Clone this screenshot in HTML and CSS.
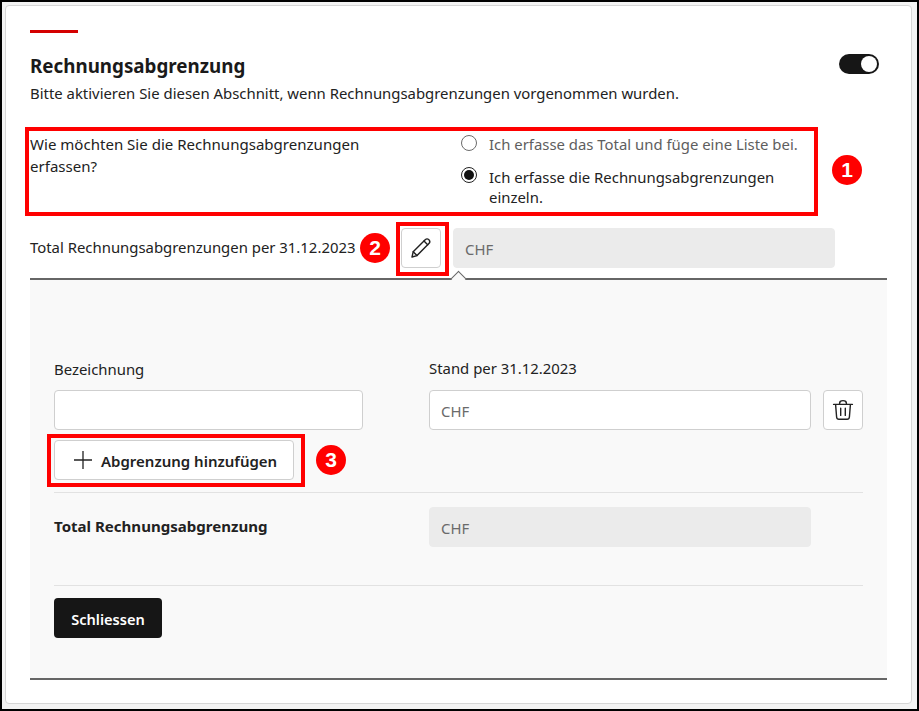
FILE: index.html
```html
<!DOCTYPE html>
<html lang="de">
<head>
<meta charset="utf-8">
<title>Rechnungsabgrenzung</title>
<link rel="stylesheet" href="styles.css">
</head>
<body>
<div class="frame">
  <section class="card">
    <div class="accent"></div>
    <div class="head">
      <h2 class="title">Rechnungsabgrenzung</h2>
      <span class="toggle"><span class="knob"></span></span>
    </div>
    <p class="sub">Bitte aktivieren Sie diesen Abschnitt, wenn Rechnungsabgrenzungen vorgenommen wurden.</p>

    <div class="question">
      <div class="q-text">Wie möchten Sie die Rechnungsabgrenzungen erfassen?</div>
      <div class="options">
        <div class="option muted"><span class="radio"></span><span>Ich erfasse das Total und füge eine Liste bei.</span></div>
        <div class="option"><span class="radio on"></span><span class="opt-text">Ich erfasse die Rechnungsabgrenzungen einzeln.</span></div>
      </div>
    </div>

    <div class="total-row">
      <span class="total-label">Total Rechnungsabgrenzungen per 31.12.2023</span>
      <button class="icon-btn" aria-label="Bearbeiten">
        <svg width="22" height="22" viewBox="0 0 22 22" fill="none" stroke="#222" stroke-width="1.4" stroke-linejoin="round" stroke-linecap="round"><path d="M2 20l1.200-5.200L15.200 2.800a2.600 2.600 0 0 1 3.700 3.700L7 18.600z"/><path d="M3.200 14.800L7 18.600"/><path d="M14 4l3.700 3.700"/></svg>
      </button>
      <div class="field disabled wide">CHF</div>
    </div>

    <div class="panel">
      <span class="caret"></span>
      <div class="cols labels">
        <span>Bezeichnung</span>
        <span class="lab-b">Stand per 31.12.2023</span>
      </div>
      <div class="cols inputs">
        <div class="field"></div>
        <div class="field">CHF</div>
        <button class="icon-btn trash" aria-label="Löschen">
          <svg width="22" height="22" viewBox="0 0 22 22" fill="none" stroke="#222" stroke-width="1.4" stroke-linecap="round" stroke-linejoin="round"><path d="M1.600 5.400h18.800"/><path d="M7.600 5.200V4.200C7.600 2.700 9 1.600 11 1.600s3.400 1.100 3.400 2.600v1"/><path d="M3.600 5.600l1 12.400c.1 1.300 1 2.200 2.300 2.200h8.200c1.300 0 2.200-.9 2.300-2.200l1-12.400"/><path d="M8.700 9.200v7.200M13.300 9.200v7.200"/></svg>
        </button>
      </div>
      <button class="add-btn">
        <svg width="18" height="18" viewBox="0 0 18 18" stroke="#222" stroke-width="1.3"><path d="M9 0v18M0 9h18"/></svg>
        <span class="add-text">Abgrenzung hinzufügen</span>
      </button>
      <hr class="rule first">
      <div class="cols sum">
        <strong class="sum-label">Total Rechnungsabgrenzung</strong>
        <div class="field disabled">CHF</div>
      </div>
      <hr class="rule second">
      <button class="close-btn">Schliessen</button>
    </div>

    <div class="mark box-1"></div>
    <div class="mark box-2"></div>
    <div class="mark box-3"></div>
    <span class="badge badge-1">1</span>
    <span class="badge badge-2">2</span>
    <span class="badge badge-3">3</span>
  </section>
</div>
</body>
</html>
```
FILE: styles.css
```css
* { box-sizing: border-box; }
html, body { margin: 0; height: 100%; }
body {
  font-family: "Noto Sans", "Open Sans", sans-serif;
  font-size: 14.9px;
  line-height: 22px;
  color: #222;
  background: #fff;
}
.frame {
  height: 711px;
  border: 2px solid #000;
  padding: 3px 5px 5px 3px;
  background: #f3f3f3;
}
.card {
  position: relative;
  height: 699px;
  background: #fff;
  border: 1px solid #d6d6d6;
  border-radius: 4px;
  padding: 24px 24px 0;
}
.accent { width: 48px; height: 3px; background: #d40000; }
.head {
  display: flex;
  justify-content: space-between;
  align-items: center;
  margin-top: 19px;
  padding-right: 8px;
}
.title { margin: 0; font-size: 18.8px; line-height: 28px; font-weight: 700; color: #1a1a1a; }
.toggle { width: 40px; height: 20px; border-radius: 10px; background: #161616; position: relative; margin-top: -4px; }
.knob { position: absolute; right: 2px; top: 2px; width: 16px; height: 16px; border-radius: 50%; background: #fff; }
.sub { margin: 2px 0 0; }
.question { display: flex; margin-top: 28px; height: 82px; }
.q-text { width: 431px; padding: 1px 90px 0 0; font-size: 15.05px; }
.options { flex: 1; padding-right: 70px; padding-top: 1px; }
.option { display: flex; gap: 12px; }
.option + .option { margin-top: 10px; line-height: 20px; }
.opt-text { padding-top: 2px; }
.option.muted { color: #5e5e5e; }
.radio { flex: none; width: 16px; height: 16px; margin-top: 2px; border: 1px solid #6b6b6b; border-radius: 50%; background: #fff; position: relative; }
.radio.on { border-color: #222; }
.radio.on::after { content: ""; position: absolute; inset: 2px; border-radius: 50%; background: #111; }
.total-row { display: flex; align-items: center; margin-top: 14px; height: 40px; }
.total-label { width: 371px; flex: none; padding-bottom: 2px; }
.field {
  height: 40px;
  border: 1px solid #cfcfcf;
  border-radius: 4px;
  background: #fff;
  padding: 0 11px;
  line-height: 40px;
  color: #6a6a6a;
}
.field.disabled { background: #ebebeb; border-color: #ebebeb; }
.field.wide { width: 382px; margin-left: 12px; }
.icon-btn {
  flex: none;
  width: 40px;
  height: 40px;
  padding: 0;
  display: flex;
  align-items: center;
  justify-content: center;
  border: 1px solid #cfcfcf;
  border-radius: 4px;
  background: #fff;
}
.panel {
  position: relative;
  margin-top: 10px;
  height: 402px;
  background: #f9f9f9;
  border-top: 2px solid #666;
  border-bottom: 2px solid #666;
  padding: 78px 24px 0;
}
.caret {
  position: absolute;
  left: 423px;
  top: -7px;
  width: 11px;
  height: 11px;
  transform: rotate(45deg);
  background: #f9f9f9;
  border-top: 1.5px solid #666;
  border-left: 1.5px solid #666;
}
.cols { display: grid; column-gap: 0; }
.labels { grid-template-columns: 375px 1fr; }
.lab-b { margin-top: -1px; }
.inputs { margin-top: 10px; grid-template-columns: 309px 66px 382px 52px; }
.inputs > :nth-child(2) { grid-column: 3; }
.trash { margin-left: 12px; }
.add-btn {
  display: flex;
  align-items: center;
  gap: 9px;
  width: 240px;
  height: 40px;
  margin-top: 10px;
  padding: 0 0 0 19px;
  font: 600 15px "Noto Sans", sans-serif;
  color: #222;
  background: #fff;
  border: 1px solid #cfcfcf;
  border-radius: 4px;
}
.add-text { padding-top: 2px; }
.rule { margin: 0; border: 0; border-top: 1px solid #e2e2e2; }
.rule.first { margin-top: 12px; }
.sum { margin-top: 14px; grid-template-columns: 375px 382px; }
.sum-label { font-weight: 700; font-size: 15.05px; line-height: 38px; }
.rule.second { margin-top: 38px; }
.close-btn {
  display: block;
  width: 108px;
  height: 40px;
  margin-top: 12px;
  padding: 2px 0 0;
  font: 600 14.6px "Noto Sans", sans-serif;
  color: #fff;
  background: #161616;
  border: 0;
  border-radius: 4px;
}
.mark { position: absolute; border: 4px solid #f00; }
.box-1 { left: 19px; top: 121px; width: 793px; height: 89px; }
.box-2 { left: 390px; top: 216px; width: 53px; height: 54px; }
.box-3 { left: 41px; top: 428px; width: 258px; height: 53px; }
.badge {
  position: absolute;
  width: 30px;
  height: 30px;
  border-radius: 50%;
  background: #f00;
  color: #fff;
  font: 700 21px/30px "Liberation Sans", sans-serif;
  text-align: center;
}
.badge-1 { left: 826px; top: 149px; }
.badge-2 { left: 354px; top: 227px; }
.badge-3 { left: 310px; top: 439px; }
```
